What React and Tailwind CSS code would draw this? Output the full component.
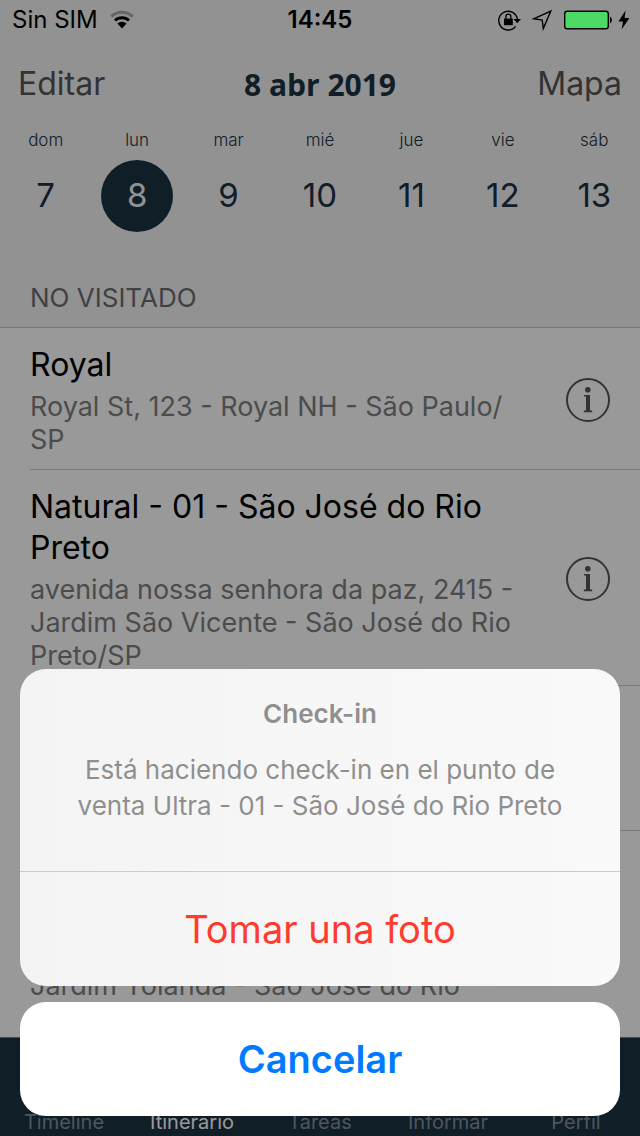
import React from 'react'

const DAYS = [
  { label: 'dom', day: 7 },
  { label: 'lun', day: 8 },
  { label: 'mar', day: 9 },
  { label: 'mié', day: 10 },
  { label: 'jue', day: 11 },
  { label: 'vie', day: 12 },
  { label: 'sáb', day: 13 },
]

const SELECTED_DAY = 8

const PLACES = [
  { name: 'Royal', address: 'Royal St, 123 - Royal NH - São Paulo/ SP' },
  {
    name: 'Natural - 01 - São José do Rio Preto',
    address: 'avenida nossa senhora da paz, 2415 - Jardim São Vicente - São José do Rio Preto/SP',
  },
]

const TABS = ['Timeline', 'Itinerario', 'Tareas', 'Informar', 'Perfil']

function WifiIcon() {
  return (
    <svg className="h-5 w-6" viewBox="0 0 24 20" aria-hidden="true">
      <path d="M0.2 5.6a17 17 0 0 1 23.6 0l-2 2.1a14 14 0 0 0-19.6 0z" fill="#666" />
      <path d="M4 9.4a11.6 11.6 0 0 1 16 0l-2 2.2a8.6 8.6 0 0 0-12 0z" />
      <path d="M7.4 13.6a6.6 6.6 0 0 1 9.2 0L12 18.6z" />
    </svg>
  )
}

function StatusBar() {
  return (
    <div className="relative z-20 grid h-10 grid-cols-3 items-center px-3 text-[24px]">
      <div className="flex items-center gap-3">
        <span>Sin SIM</span>
        <WifiIcon />
      </div>
      <div className="text-center font-semibold">14:45</div>
      <div className="-mr-0.5 flex items-center justify-end gap-2">
        <svg className="h-6 w-7" viewBox="0 0 28 24" aria-hidden="true">
          <path d="M19.6 18.4A9.4 9.4 0 1 1 21.4 11" fill="none" stroke="#000" strokeWidth="1.4" />
          <path d="M17.4 11h7.6l-3.8 4.2z" />
          <path d="M8 10.6h8.8v6.6H8z" />
          <path d="M9.9 11V8.6a2.5 2.5 0 0 1 5 0V11" fill="none" stroke="#000" strokeWidth="1.3" />
        </svg>
        <svg className="h-6 w-5" viewBox="0 0 20 24" aria-hidden="true">
          <path d="M1.6 10.8L18.8 3L11.3 20.6L10.2 12Z" fill="none" stroke="#000" strokeWidth="1.4" />
        </svg>
        <div className="flex items-center gap-1">
          <svg className="h-6 w-[54px]" viewBox="0 0 54 24" aria-hidden="true">
            <rect x="4.7" y="3.2" width="43.6" height="17.6" rx="2.6" fill="#4cd964" stroke="#000" strokeWidth="1.4" />
            <path d="M50 8.6a4 4 0 0 1 0 6.8z" />
          </svg>
          <svg className="h-6 w-3" viewBox="0 0 12 24" aria-hidden="true">
            <path d="M7.6 2.6L0.4 13.4H5L3.6 21.4L11.4 10H6.6z" />
          </svg>
        </div>
      </div>
    </div>
  )
}

function InfoButton({ label }) {
  return (
    <button type="button" aria-label={label} className="mr-[30px] size-11 shrink-0">
      <svg className="size-11" viewBox="0 0 44 44" aria-hidden="true">
        <circle cx="22" cy="22" r="21" fill="none" stroke="#555" strokeWidth="2" />
        <circle cx="21.8" cy="11.8" r="2.8" fill="#555" />
        <path d="M18 17h6v15.6h2.2v1.6h-8.4v-1.6H20V18.6h-2z" fill="#555" />
      </svg>
    </button>
  )
}

function PlaceRow({ name, address }) {
  return (
    <li className="ml-[30px] flex items-center justify-between border-b border-[#c8c8c8] pt-4 pb-[13px]">
      <div className="w-[490px]">
        <h3 className="text-[32px] leading-[41px] text-black">{name}</h3>
        <p className="mt-[5px] text-[27px] leading-[33px] text-[#7f7f7f]">{address}</p>
      </div>
      <InfoButton label={`Información de ${name}`} />
    </li>
  )
}

function CheckInSheet() {
  return (
    <div className="absolute inset-0 z-10 flex flex-col justify-end gap-4 bg-black/40 p-5">
      <div
        role="dialog"
        aria-labelledby="sheet-title"
        className="overflow-hidden rounded-[26px] bg-linear-to-r from-[#f4f4f4] to-[#f9f9f9] text-center"
      >
        <div className="h-[203px] border-b border-[#cbcbcb] px-12 pt-[27px] text-[#8f8f8f]">
          <h2 id="sheet-title" className="text-[26px] leading-9 font-semibold">Check-in</h2>
          <p className="mt-5 text-[26px] leading-9">
            Está haciendo check-in en el punto de venta Ultra - 01 - São José do Rio Preto
          </p>
        </div>
        <button type="button" className="h-[114px] w-full text-[38px] text-[#ff3b30]">
          Tomar una foto
        </button>
      </div>
      <button type="button" className="h-[114px] w-full rounded-[26px] bg-white text-[38px] font-semibold text-[#007aff]">
        Cancelar
      </button>
    </div>
  )
}

export default function App() {
  return (
    <div className="relative flex h-screen flex-col overflow-hidden bg-white font-['Inter',sans-serif]">
      <header className="shrink-0 bg-[#f4f4f4]">
        <StatusBar />
        <div className="grid h-[88px] grid-cols-3 items-center px-[18px] text-[32px] text-[#555]">
          <button type="button" className="text-left">Editar</button>
          <h1 className="text-center font-['Open_Sans',sans-serif] text-[30px] font-bold whitespace-nowrap text-[#1c3244]">
            8 abr 2019
          </h1>
          <button type="button" className="text-right">Mapa</button>
        </div>
        <div className="grid grid-cols-7 text-[#1c3244]">
          {DAYS.map(({ label, day }) => (
            <button key={day} type="button" className="flex flex-col items-center gap-2">
              <span className="text-[17px] leading-6 font-light">{label}</span>
              <span
                className={
                  day === SELECTED_DAY
                    ? 'flex size-[72px] items-center justify-center rounded-full bg-[#1c3244] text-[33px] text-[#f4f4f4]'
                    : 'flex size-[72px] items-center justify-center text-[33px]'
                }
              >
                {day}
              </span>
            </button>
          ))}
        </div>
        <h2 className="mt-12 border-b border-[#c8c8c8] px-[30px] pb-[11px] text-[26px] leading-9 text-[#6d6d72]">
          NO VISITADO
        </h2>
      </header>

      <main className="min-h-0 flex-1 overflow-hidden">
        <ul>
          {PLACES.map((place) => (
            <PlaceRow key={place.name} {...place} />
          ))}
          <li className="ml-[30px] h-[145px] border-b border-[#c8c8c8]" />
          <li className="ml-[30px] pt-[138px] text-[27px] leading-[33px] text-[#7f7f7f]">
            Jardim Yolanda - São José do Rio
          </li>
        </ul>
      </main>

      <nav className="grid h-[99px] shrink-0 grid-cols-5 items-end border-t border-[#7f7f7f] bg-[#1c3244] pb-0.5 text-[20px] leading-6">
        {TABS.map((tab) => (
          <a
            key={tab}
            href="#"
            className={tab === 'Itinerario' ? 'text-center text-white' : 'text-center text-[#82909e]'}
          >
            {tab}
          </a>
        ))}
      </nav>

      <CheckInSheet />
    </div>
  )
}
